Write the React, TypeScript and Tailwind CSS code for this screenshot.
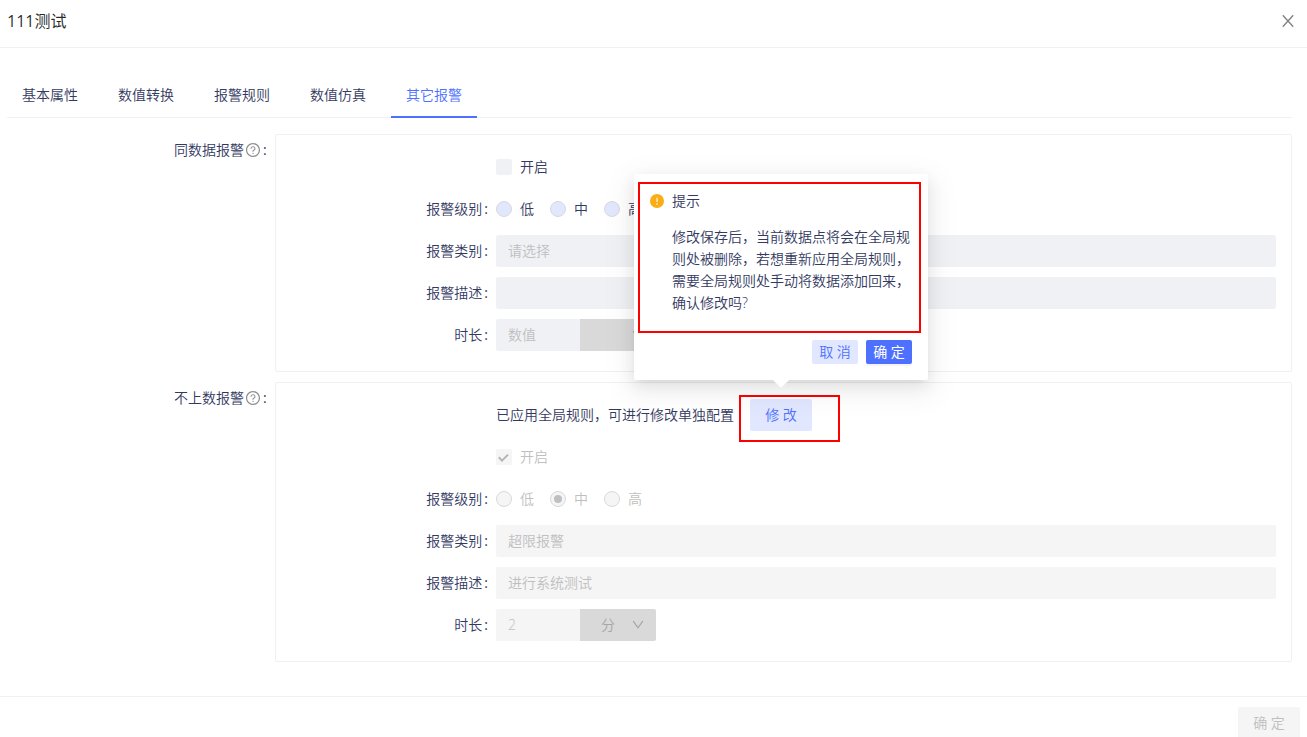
import { useState } from "react";
import type { ReactNode } from "react";

const TABS = ["基本属性", "数值转换", "报警规则", "数值仿真", "其它报警"];
const LEVELS = ["低", "中", "高"];

function QuestionIcon() {
  return (
    <svg viewBox="64 64 896 896" className="ml-0.5 size-3.5 shrink-0 fill-[#8c8c8c]" aria-hidden="true">
      <path d="M512 64C264.6 64 64 264.6 64 512s200.6 448 448 448 448-200.6 448-448S759.4 64 512 64zm0 820c-205.4 0-372-166.6-372-372s166.6-372 372-372 372 166.6 372 372-166.6 372-372 372z" />
      <path d="M623.6 316.7C593.6 290.4 554 276 512 276s-81.6 14.5-111.6 40.7C369.2 344 352 380.7 352 420v7.6c0 4.4 3.6 8 8 8h48c4.4 0 8-3.6 8-8V420c0-44.1 43.1-80 96-80s96 35.9 96 80c0 31.1-22 59.6-56.1 72.7-21.2 8.1-39.2 22.3-52.1 40.9-13.1 19-19.9 41.8-19.9 64.9V620c0 4.4 3.6 8 8 8h48c4.4 0 8-3.6 8-8v-22.7a48.3 48.3 0 0130.9-44.8c59-22.7 97.1-74.7 97.1-132.5.1-39.3-17.1-76-48.3-103.3zM472 732a40 40 0 1080 0 40 40 0 10-80 0z" />
    </svg>
  );
}

function CloseIcon() {
  return (
    <svg viewBox="0 0 12 12" className="size-3" fill="none" stroke="#7f7f7f" strokeWidth="1.4" aria-hidden="true">
      <path d="M0.8 0.3L11.2 11.7M11.2 0.3L0.8 11.7" />
    </svg>
  );
}

function Chevron() {
  return (
    <svg
      viewBox="0 0 12 12"
      className="pointer-events-none absolute right-3 top-2.5 size-3"
      fill="none"
      stroke="#a6a6a6"
      strokeWidth="1.2"
      aria-hidden="true"
    >
      <path d="M1.2 2.2L6 8.8L10.8 2.2" />
    </svg>
  );
}

function WarnIcon() {
  return (
    <svg viewBox="0 0 14 14" className="mt-1 size-3.5 shrink-0" aria-hidden="true">
      <circle cx="7" cy="7" r="7" fill="#faad14" />
      <rect x="6.5" y="3.4" width="1.1" height="4.6" rx="0.5" fill="#fff" />
      <circle cx="7" cy="10" r="0.8" fill="#fff" />
    </svg>
  );
}

function Row({ label, htmlFor, children }: { label?: string; htmlFor?: string; children: ReactNode }) {
  return (
    <div className="grid grid-cols-[5fr_19fr]">
      <div className="flex h-8 items-center justify-end pr-2">
        {label && (
          <label htmlFor={htmlFor} className="flex gap-0.5 whitespace-nowrap">
            {label}
            <span className="font-normal">:</span>
          </label>
        )}
      </div>
      <div className="flex h-8 min-w-0 items-center">{children}</div>
    </div>
  );
}

function Section({ title, children }: { title: string; children: ReactNode }) {
  return (
    <section className="grid grid-cols-[5fr_19fr]">
      <h2 className="flex h-8 items-center justify-end pr-2">
        {title}
        <QuestionIcon />
        <span className="ml-[3px] font-normal">:</span>
      </h2>
      <div className="flex min-w-0 flex-col gap-2.5 rounded-xs border border-[#f0f0f0] px-[15px] pt-4 pb-5">
        {children}
      </div>
    </section>
  );
}

interface AlarmProps {
  id: string;
  locked?: boolean;
  enabled?: boolean;
  level?: string;
  category?: string;
  description?: string;
  duration?: string;
  unit?: string;
}

function AlarmFields({ id, locked, enabled, level, category, description, duration, unit }: AlarmProps) {
  const [checked, setChecked] = useState(!!enabled);
  const [picked, setPicked] = useState(level ?? "");

  const field = locked ? "bg-[#f5f5f5] text-[#bfbfbf]" : "bg-[#f0f1f5] text-[#33395f]";
  const text = locked ? "text-[#bfbfbf]" : "";

  return (
    <>
      <Row>
        <label className={`flex items-center gap-2 ${text}`}>
          <span className="relative flex size-4">
            <input
              type="checkbox"
              checked={checked}
              disabled={locked}
              onChange={(e) => setChecked(e.target.checked)}
              className={`size-4 appearance-none rounded-xs ${locked ? "bg-[#f5f5f5]" : "bg-[#f0f1f5]"}`}
            />
            {checked && (
              <svg
                viewBox="0 0 16 16"
                className="pointer-events-none absolute inset-0 size-4"
                fill="none"
                stroke="#b5b5b5"
                strokeWidth="2"
                aria-hidden="true"
              >
                <path d="M2.8 8.2L6 11.6L12 5.6" />
              </svg>
            )}
          </span>
          开启
        </label>
      </Row>
      <Row label="报警级别">
        <div className="flex gap-4">
          {LEVELS.map((l) => (
            <label key={l} className={`flex items-center gap-2 ${text}`}>
              <span className="relative flex size-4">
                <input
                  type="radio"
                  name={`${id}-level`}
                  checked={picked === l}
                  disabled={locked}
                  onChange={() => setPicked(l)}
                  className={`size-4 appearance-none rounded-full border border-[#d9d9d9] ${locked ? "bg-[#f5f5f5]" : "bg-[#e1e7ff]"}`}
                />
                {picked === l && (
                  <span className="pointer-events-none absolute inset-1 rounded-full bg-[#bfbfbf]" />
                )}
              </span>
              {l}
            </label>
          ))}
        </div>
      </Row>
      <Row label="报警类别" htmlFor={`${id}-category`}>
        <select
          id={`${id}-category`}
          disabled={locked}
          className={`h-8 w-full appearance-none rounded-xs px-3 opacity-100 ${field} ${category ? "" : "text-[#bfbfbf]"}`}
        >
          <option>{category ?? "请选择"}</option>
        </select>
      </Row>
      <Row label="报警描述" htmlFor={`${id}-description`}>
        <input
          id={`${id}-description`}
          type="text"
          defaultValue={description}
          disabled={locked}
          className={`h-8 w-full rounded-xs px-3 pb-0.5 ${field}`}
        />
      </Row>
      <Row label="时长" htmlFor={`${id}-duration`}>
        <input
          id={`${id}-duration`}
          type="text"
          placeholder="数值"
          defaultValue={duration}
          disabled={locked}
          className={`h-8 w-21 rounded-l-xs px-3 pb-0.5 placeholder:text-[#bfbfbf] ${field}`}
        />
        <div className="relative">
          <select
            aria-label="时长单位"
            disabled={locked}
            className="h-8 w-19 appearance-none rounded-r-xs bg-[#d9d9d9] px-[21px] text-[#a6a6a6] opacity-100"
          >
            <option>{unit ?? ""}</option>
          </select>
          <Chevron />
        </div>
      </Row>
    </>
  );
}

function ConfirmPopover({ onClose }: { onClose: () => void }) {
  return (
    <div
      role="dialog"
      aria-label="提示"
      className="absolute bottom-full left-1/2 z-10 mb-[19px] w-[294px] -translate-x-1/2 rounded-xs bg-white p-4 shadow-[0_3px_6px_-4px_rgba(0,0,0,0.12),0_6px_16px_0_rgba(0,0,0,0.08),0_9px_28px_8px_rgba(0,0,0,0.05)]"
    >
      <div className="flex gap-2">
        <WarnIcon />
        <div>
          <div>提示</div>
          <p className="mt-3.5">
            修改保存后，当前数据点将会在全局规则处被删除，若想重新应用全局规则，需要全局规则处手动将数据添加回来，确认修改吗?
          </p>
        </div>
      </div>
      <div className="mt-[26px] flex justify-end gap-2">
        <button type="button" onClick={onClose} className="h-6 w-[46px] rounded-xs bg-[#e1e7ff] text-[#4d70ff]">
          取 消
        </button>
        <button
          type="button"
          onClick={onClose}
          className="h-6 w-[46px] rounded-xs bg-[#4d70ff] font-normal text-white shadow-[0_2px_0_rgba(0,0,0,0.04)]"
        >
          确 定
        </button>
      </div>
      {/* arrow */}
      <svg viewBox="0 0 16 8" className="absolute top-full left-1/2 h-2 w-4 -translate-x-1/2 fill-white" aria-hidden="true">
        <path d="M0 0H16L9 7Q8 7.8 7 7Z" />
      </svg>
      <div className="pointer-events-none absolute top-2 right-[7px] left-1 h-[151px] border-2 border-[#ff0000]" />
    </div>
  );
}

export default function App() {
  const [active, setActive] = useState("其它报警");
  const [confirming, setConfirming] = useState(true);

  return (
    <div
      lang="zh-CN"
      className="flex h-screen flex-col overflow-hidden bg-white font-['Open_Sans','Noto_Sans_CJK_SC',sans-serif] text-sm/[22px] font-[350] text-[#33395f]"
    >
      <header className="flex h-12 shrink-0 items-center justify-between border-b border-[#f0f0f0] pr-[13px] pb-1.5 pl-[7px]">
        <h1 className="text-base font-normal text-black/85">111测试</h1>
        <button type="button" aria-label="关闭">
          <CloseIcon />
        </button>
      </header>

      <main className="min-h-0 flex-1 overflow-y-auto pt-6 pr-[15px] pl-[7px]">
        <nav role="tablist" className="flex gap-2.5 border-b border-[#f0f0f0]">
          {TABS.map((tab) => (
            <button
              key={tab}
              type="button"
              role="tab"
              aria-selected={tab === active}
              onClick={() => setActive(tab)}
              className={`-mb-px h-[46px] border-b-2 px-[15px] pt-0.5 ${
                tab === active ? "border-[#4d70ff] text-[#4d70ff]" : "border-transparent"
              }`}
            >
              {tab}
            </button>
          ))}
        </nav>

        <form className="mt-4 flex flex-col gap-2.5">
          <Section title="同数据报警">
            <AlarmFields id="same" />
          </Section>

          <Section title="不上数报警">
            <Row>
              <span className="whitespace-nowrap">已应用全局规则，可进行修改单独配置</span>
              <div className="relative ml-4">
                <button
                  type="button"
                  onClick={() => setConfirming(true)}
                  className="h-8 w-[62px] rounded-xs bg-[#e1e7ff] text-[#4d70ff]"
                >
                  修 改
                </button>
                <div className="pointer-events-none absolute -top-1 -left-[11px] h-[47px] w-[101px] border-2 border-[#ff0000]" />
                {confirming && <ConfirmPopover onClose={() => setConfirming(false)} />}
              </div>
            </Row>
            <AlarmFields
              id="missing"
              locked
              enabled
              level="中"
              category="超限报警"
              description="进行系统测试"
              duration="2"
              unit="分"
            />
          </Section>
        </form>
      </main>

      <footer className="flex h-[41px] shrink-0 items-start justify-end border-t border-[#f0f0f0] pt-2.5 pr-[7px]">
        <button type="button" disabled className="h-8 w-[62px] shrink-0 rounded-xs bg-[#f5f5f5] text-[#bfbfbf]">
          确 定
        </button>
      </footer>
    </div>
  );
}
